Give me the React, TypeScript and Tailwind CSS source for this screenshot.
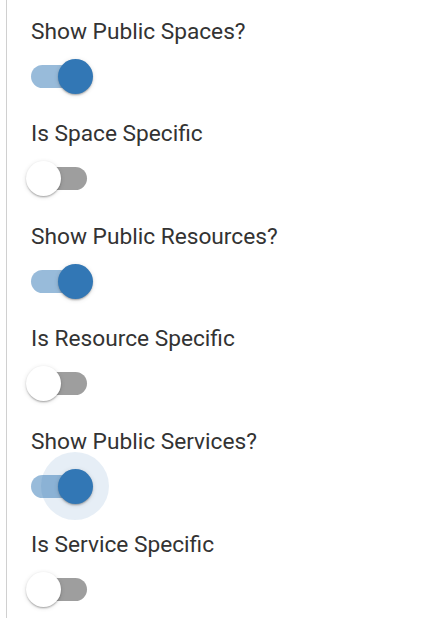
import React from "react";

type Row = { label: string; checked: boolean; focused?: boolean };

const rows: Row[] = [
  { label: "Show Public Spaces?", checked: true },
  { label: "Is Space Specific", checked: false },
  { label: "Show Public Resources?", checked: true },
  { label: "Is Resource Specific", checked: false },
  { label: "Show Public Services?", checked: true, focused: true },
  { label: "Is Service Specific", checked: false },
];

const Toggle = ({ checked, focused }: { checked: boolean; focused?: boolean }) => (
  <div className="relative w-[56px] h-[23px]">
    <div
      className={
        checked
          ? "absolute inset-0 rounded-full bg-[#3277b5] opacity-50"
          : "absolute inset-0 rounded-full bg-[#9e9e9e]"
      }
    />
    {focused && (
      <div className="absolute left-[10px] top-[-23px] w-[68px] h-[68px] rounded-full bg-[#3277b5]/12" />
    )}
    <div
      className={
        checked
          ? "absolute left-[27px] top-[-6px] w-[35px] h-[35px] rounded-full bg-[#3277b5] shadow-[0_2px_2px_-1px_rgba(0,0,0,0.2),0_1px_2px_rgba(0,0,0,0.14),0_1px_5px_rgba(0,0,0,0.12)]"
          : "absolute left-[-5px] top-[-6px] w-[35px] h-[35px] rounded-full bg-white shadow-[0_2px_2px_-1px_rgba(0,0,0,0.2),0_1px_2px_rgba(0,0,0,0.14),0_1px_5px_rgba(0,0,0,0.12)]"
      }
    />
  </div>
);

export default function App() {
  return (
    <div className="bg-white w-[437px] h-[618px] font-['Roboto',sans-serif]">
      <div className="ml-[6px] border-l border-[#d0d0d0] pl-[24px] pt-[15.5px] flex flex-col">
        {rows.map((r) => (
          <div key={r.label} className="h-[102.64px] flex flex-col">
            <div className="text-[22.7px] leading-[32px] text-[#333]">{r.label}</div>
            <div className="h-[57px] flex items-center">
              <Toggle checked={r.checked} focused={r.focused} />
            </div>
          </div>
        ))}
      </div>
    </div>
  );
}
